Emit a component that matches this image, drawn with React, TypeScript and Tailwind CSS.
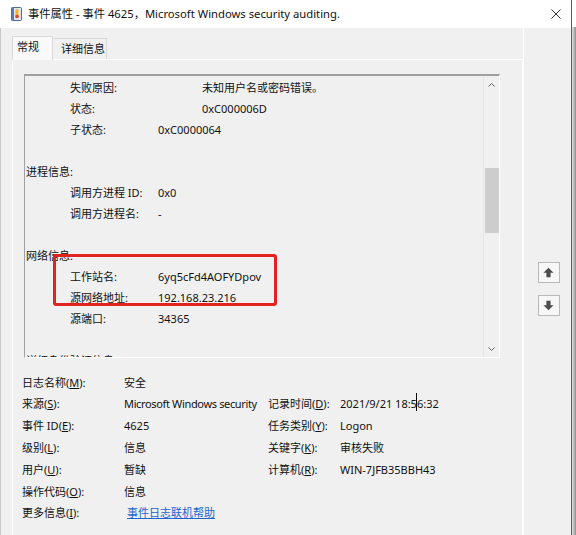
import React from "react";

type Line =
  | { kind: "blank" }
  | { kind: "head"; text: string }
  | { kind: "item"; label: string; value: string; wide?: boolean };

const lines: Line[] = [
  { kind: "item", label: "失败原因:", value: "未知用户名或密码错误。", wide: true },
  { kind: "item", label: "状态:", value: "0xC000006D", wide: true },
  { kind: "item", label: "子状态:", value: "0xC0000064" },
  { kind: "blank" },
  { kind: "head", text: "进程信息:" },
  { kind: "item", label: "调用方进程 ID:", value: "0x0" },
  { kind: "item", label: "调用方进程名:", value: "-" },
  { kind: "blank" },
  { kind: "head", text: "网络信息:" },
  { kind: "item", label: "工作站名:", value: "6yq5cFd4AOFYDpov" },
  { kind: "item", label: "源网络地址:", value: "192.168.23.216" },
  { kind: "item", label: "源端口:", value: "34365" },
  { kind: "blank" },
  { kind: "head", text: "详细身份验证信息:" },
  { kind: "item", label: "登录进程:", value: "NtLmSsp" },
  { kind: "item", label: "身份验证数据包:", value: "NTLM" },
];

function Key({ label, k }: { label: string; k: string }) {
  return (
    <span className="whitespace-nowrap">
      {label}(<u>{k}</u>):
    </span>
  );
}

function ArrowBtn({ down }: { down?: boolean }) {
  return (
    <div className="flex h-[21px] w-[22px] items-center justify-center border border-[#b9b9b9] bg-[#f7f7f7]">
      <svg width="11" height="11" viewBox="0 0 10 10" className={down ? "rotate-180" : ""}>
        <path d="M5 0.6 L9.6 5.2 H6.9 V9.4 H3.1 V5.2 H0.4 Z" fill="#4d4d4d" />
      </svg>
    </div>
  );
}

export default function App() {
  return (
    <div className="flex h-[535px] w-[576px] overflow-hidden bg-[#f0f0f0] font-['Noto_Sans','Noto_Sans_CJK_SC',sans-serif] text-[11px] text-[#111]">
      <div className="flex w-[571px] flex-col">
        {/* title bar */}
        <div className="flex h-[28px] shrink-0 items-center bg-white pl-[11px] pr-[10px]">
          <svg width="11" height="14" viewBox="0 0 11 14">
            <rect x="0.5" y="0.5" width="10" height="13" rx="1" fill="#dfe6f0" stroke="#4a6a96" />
            <rect x="0.5" y="0.5" width="2.5" height="13" fill="#5a7aa8" />
            <rect x="4.5" y="2" width="3" height="8" rx="1.5" fill="#f2b233" />
            <circle cx="6" cy="9.5" r="1.8" fill="#d9452b" />
          </svg>
          <span className="ml-[6px] text-[11.25px]">事件属性 - 事件 4625，Microsoft Windows security auditing.</span>
          <svg className="ml-auto" width="10" height="10" viewBox="0 0 10 10">
            <path d="M0.5 0.5 L9.5 9.5 M9.5 0.5 L0.5 9.5" stroke="#333" strokeWidth="1" />
          </svg>
        </div>

        <div className="flex flex-1 border-l border-[#c8c8c8]">
          <div className="flex w-[522px] flex-col pl-[11px] pt-[7px]">
            {/* tabs */}
            <div className="relative z-10 flex h-[24px] items-end">
              <div className="-mb-px h-[24px] w-[41px] border border-b-0 border-[#d9d9d9] bg-[#f9f9f9] pl-[4px] leading-[20px]">
                常规
              </div>
              <div className="h-[21px] w-[54px] border border-b-0 border-l-0 border-[#d9d9d9] pl-[8px] leading-[20px]">
                详细信息
              </div>
            </div>

            {/* panel */}
            <div className="flex flex-1 flex-col border border-b-0 border-white pl-[11px] pt-[14px]">
              <div className="flex h-[284px] w-[476px] border-b border-l border-r border-t-2 border-b-white border-l-[#a0a0a0] border-r-white border-t-[#a0a0a0]">
                <div className="relative flex-1 overflow-hidden pt-[1px]">
                  {lines.map((l, i) =>
                    l.kind === "blank" ? (
                      <div key={i} className="h-[21px]" />
                    ) : l.kind === "head" ? (
                      <div key={i} className="h-[21px] pl-[1px] leading-[21px]">
                        {l.text}
                      </div>
                    ) : (
                      <div key={i} className="flex h-[21px] pl-[45px] leading-[21px]">
                        <span className={l.wide ? "w-[132px]" : "w-[88px]"}>{l.label}</span>
                        <span>{l.value}</span>
                      </div>
                    )
                  )}
                  <div className="absolute left-[28px] top-[178px] h-[52px] w-[224px] rounded-[3px] border-[3px] border-[#e0241d]" />
                </div>
                <div className="flex w-[16px] flex-col items-center border-l border-[#e6e6e6]">
                  <div className="flex h-[17px] items-center">
                    <svg width="7" height="4" viewBox="0 0 7 4">
                      <path d="M0.5 3.5 L3.5 0.5 L6.5 3.5" stroke="#606060" fill="none" />
                    </svg>
                  </div>
                  <div className="mt-[75px] h-[65px] w-[14px] bg-[#cdcdcd]" />
                  <div className="mt-auto flex h-[17px] items-center">
                    <svg width="7" height="4" viewBox="0 0 7 4">
                      <path d="M0.5 0.5 L3.5 3.5 L6.5 0.5" stroke="#606060" fill="none" />
                    </svg>
                  </div>
                </div>
              </div>

              {/* fields */}
              <div className="-ml-[2px] mt-[14px] grid auto-rows-[21.8px] grid-cols-[102px_144px_72px_1fr] items-center">
                <Key label="日志名称" k="M" />
                <span>安全</span>
                <span />
                <span />

                <Key label="来源" k="S" />
                <span className="whitespace-nowrap tracking-[-0.35px]">Microsoft Windows security</span>
                <Key label="记录时间" k="D" />
                <span className="whitespace-nowrap">
                  2021/9/21 18:5
                  <span className="relative">
                    <span className="absolute -left-[1px] -top-[3px] h-[18px] w-px bg-black" />
                  </span>
                  6:32
                </span>

                <Key label="事件 ID" k="E" />
                <span>4625</span>
                <Key label="任务类别" k="Y" />
                <span>Logon</span>

                <Key label="级别" k="L" />
                <span>信息</span>
                <Key label="关键字" k="K" />
                <span>审核失败</span>

                <Key label="用户" k="U" />
                <span>暂缺</span>
                <Key label="计算机" k="R" />
                <span>WIN-7JFB35BBH43</span>

                <Key label="操作代码" k="O" />
                <span>信息</span>
                <span />
                <span />

                <Key label="更多信息" k="I" />
                <span className="ml-[3px] whitespace-nowrap text-[#1f63d2] underline">事件日志联机帮助</span>
                <span />
                <span />
              </div>
            </div>
          </div>

          {/* prev / next buttons */}
          <div className="flex flex-1 flex-col items-center gap-[12px] border-l border-white pl-[2px] pt-[234px]">
            <ArrowBtn />
            <ArrowBtn down />
          </div>
        </div>
      </div>
      <div className="flex w-[5px] flex-col border-l border-[#5f5f5f]">
        <div className="h-[27px] bg-white" />
        <div className="flex-1 bg-gradient-to-r from-[#e2e2e2] to-[#8e8e8e]" />
      </div>
    </div>
  );
}
